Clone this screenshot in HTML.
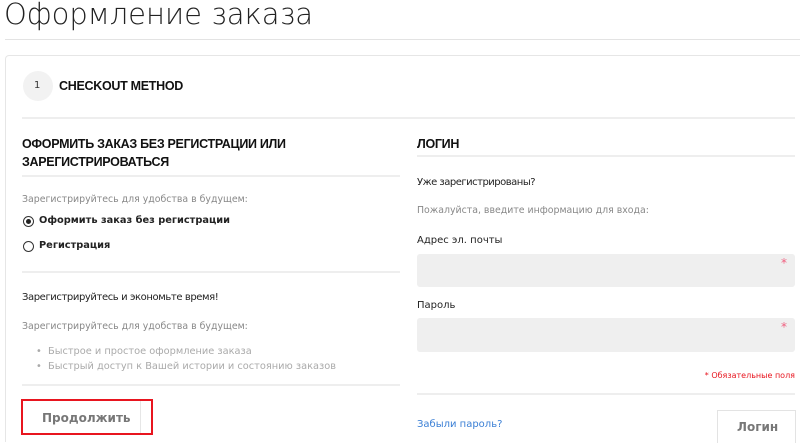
<!DOCTYPE html><html><head><meta charset="utf-8"><style>
html,body{margin:0;width:800px;height:443px;overflow:hidden}
body{background:#fff;font-family:"DejaVu Sans","Liberation Sans",sans-serif;position:relative}
.a{position:absolute;white-space:nowrap}
.h{font-family:"Liberation Sans",sans-serif;font-weight:bold;font-size:12.5px;color:#111;letter-spacing:-0.3px}
.g{font-size:9.4px;color:#888}
.d{font-size:10px;color:#222}
.ln{position:absolute;height:2px;background:#eee}
</style></head><body>
<div class="a" style="left:4px;top:-3px;font-family:'DejaVu Sans',sans-serif;font-weight:200;font-size:29px;color:#222">Оформление заказа</div>
<div class="ln" style="left:5px;top:39px;width:795px;height:1px;background:#e3e3e3"></div>
<div style="position:absolute;left:5px;top:55px;width:800px;height:386px;border:1px solid #e6e6e6;border-bottom:none;border-radius:4px 4px 0 0"></div>
<div style="position:absolute;left:23px;top:71px;width:30px;height:30px;border-radius:50%;background:#f2f2f2"></div>
<div class="a" style="left:34px;top:80px;font-size:10px;color:#333">1</div>
<div class="a h" style="left:59px;top:79px">CHECKOUT METHOD</div>
<div class="ln" style="left:22px;top:117px;width:773px"></div>
<div class="a h" style="left:22px;top:137px">ОФОРМИТЬ ЗАКАЗ БЕЗ РЕГИСТРАЦИИ ИЛИ</div>
<div class="a h" style="left:22px;top:155px">ЗАРЕГИСТРИРОВАТЬСЯ</div>
<div class="ln" style="left:22px;top:175px;width:378px"></div>
<div class="a g" style="left:22px;top:194px">Зарегистрируйтесь для удобства в будущем:</div>
<div style="position:absolute;left:23px;top:216px;width:9px;height:9px;border:1px solid #333;border-radius:50%"></div>
<div style="position:absolute;left:26px;top:219px;width:5px;height:5px;background:#222;border-radius:50%"></div>
<div class="a" style="left:39px;top:215px;font-size:9.8px;font-weight:bold;color:#222">Оформить заказ без регистрации</div>
<div style="position:absolute;left:23px;top:241px;width:9px;height:9px;border:1px solid #333;border-radius:50%"></div>
<div class="a" style="left:39px;top:240px;font-size:9.8px;font-weight:bold;color:#222">Регистрация</div>
<div class="ln" style="left:22px;top:271px;width:378px"></div>
<div class="a d" style="left:22px;top:292px;letter-spacing:-0.4px">Зарегистрируйтесь и экономьте время!</div>
<div class="a g" style="left:22px;top:321px">Зарегистрируйтесь для удобства в будущем:</div>
<div class="a g" style="left:36px;top:346px;color:#aaa;font-size:9.8px">•&nbsp;&nbsp;Быстрое и простое оформление заказа</div>
<div class="a g" style="left:36px;top:361px;color:#aaa;font-size:9.8px">•&nbsp;&nbsp;Быстрый доступ к Вашей истории и состоянию заказов</div>
<div class="ln" style="left:22px;top:384px;width:378px"></div>
<div style="position:absolute;left:22px;top:400px;width:118px;height:33px;border-right:1px solid #e6e6e6"></div>
<div style="position:absolute;left:21px;top:399px;width:128px;height:32px;border:2px solid #e8151f"></div>
<div class="a" style="left:42px;top:411px;font-size:12px;font-weight:bold;color:#777">Продолжить</div>
<div class="a h" style="left:417px;top:137px">ЛОГИН</div>
<div class="ln" style="left:417px;top:155px;width:378px"></div>
<div class="a d" style="left:417px;top:177px;letter-spacing:-0.5px">Уже зарегистрированы?</div>
<div class="a g" style="left:417px;top:205px">Пожалуйста, введите информацию для входа:</div>
<div class="a d" style="left:417px;top:235px">Адрес эл. почты</div>
<div style="position:absolute;left:417px;top:254px;width:378px;height:33px;background:#efefef;border-radius:3px"></div>
<div class="a" style="left:781px;top:256px;color:#f06080;font-size:12px">*</div>
<div class="a d" style="left:417px;top:300px">Пароль</div>
<div style="position:absolute;left:417px;top:318px;width:378px;height:34px;background:#efefef;border-radius:3px"></div>
<div class="a" style="left:781px;top:320px;color:#f06080;font-size:12px">*</div>
<div class="a" style="right:5px;top:371px;font-size:8px;color:#e8151f">* Обязательные поля</div>
<div class="ln" style="left:417px;top:393px;width:378px"></div>
<div class="a" style="left:417px;top:419px;font-size:10px;color:#3a7fd5">Забыли пароль?</div>
<div style="position:absolute;left:717px;top:410px;width:77px;height:33px;border:1px solid #e3e3e3;border-bottom:none"></div>
<div class="a" style="left:737px;top:420px;font-size:12px;font-weight:bold;color:#777">Логин</div>
</body></html>
